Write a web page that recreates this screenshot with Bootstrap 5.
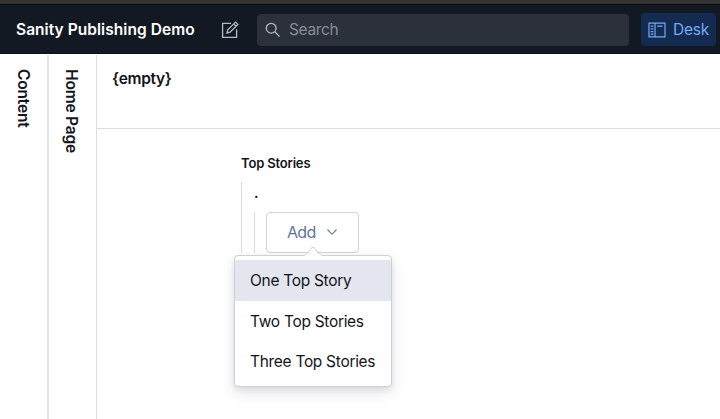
<!DOCTYPE html>
<html lang="en">
<head>
<meta charset="utf-8">
<meta name="viewport" content="width=device-width, initial-scale=1">
<title>Sanity Publishing Demo</title>
<link rel="stylesheet" href="https://cdn.jsdelivr.net/npm/bootstrap@5.3.0/dist/css/bootstrap.min.css">
<style>
body{font-family:Inter,"Liberation Sans",sans-serif;font-size:16px;line-height:20px;color:#13141b;background:#fff;height:100vh;overflow:hidden}
.window-edge{height:5px;background:#373335;border-bottom:1px solid #080a0e}
.studio-bar{height:49px;background:#131923;border-bottom:1px solid #090f19;padding:8px 4px 7px 16px}
.studio-name{width:205px;color:#fff;font-weight:600;font-size:15.5px;letter-spacing:.05px;white-space:nowrap;padding-top:1px}
.compose{width:36px;color:#b4bac5;line-height:0}
.search-box{width:372px;height:32px;background:#2b303a;border-radius:4px;padding-left:8px;color:#878c97;font-size:15.5px;letter-spacing:-.35px}
.search-box svg{color:#b4bac4}
.desk-tab{width:75px;height:33px;margin-left:12px;background:#132b50;color:#79a9f5;border-radius:4px;padding:0 0 0 7px;gap:7px;font-size:15.5px;letter-spacing:-.25px;line-height:20px;border:0}
.desk-tab:hover{background:#132b50;color:#79a9f5}
.side-pane{font-weight:600;font-size:15.5px;letter-spacing:-.18px;writing-mode:vertical-rl;padding-top:14px;line-height:20px}
.pane-content{width:49px;border-right:2px solid #e3e4e8;padding-right:14px;margin-top:1px}
.pane-home{width:48px;border-right:1px solid #dcdde1;padding-right:15px;margin-top:1px}
.doc-head{height:75px;border-bottom:1px solid #dcdde0;padding:15px 15px;font-weight:600;font-size:15.5px;letter-spacing:-.3px}
.doc-body{padding:25px 0 0 144px}
.field-label{font-weight:600;font-size:13px;line-height:18px;letter-spacing:-.17px}
.level-one{border-left:1px solid #d9dbe0;margin-top:10px;padding-left:12px;height:71px}
.item-dot{height:30px;line-height:21px;font-size:14px;font-weight:600}
.level-two{border-left:1px solid #d9dbe0;height:41px;padding-left:11px}
.add-btn{width:93px;height:41px;border:1px solid #cfd2d8;border-radius:4px;color:#62759b;font-size:16px;letter-spacing:-.7px;line-height:20px;padding:0 0 1px 20px;gap:10px}
.story-menu{position:absolute;display:block;left:-32px;top:43px;width:158px;height:132px;min-width:0;padding:4px 0;border:1px solid #ccd0d7;border-radius:4px;box-shadow:0 6px 14px rgba(30,40,60,.13),0 2px 5px rgba(30,40,60,.08);font-size:15.5px;letter-spacing:-.3px;color:#13141b}
.story-menu .dropdown-item{height:40.700px;padding:11px 0 0 15px;line-height:20px;color:#13141b}
.story-menu .dropdown-item.active{background:#e3e6ee;color:#13141b}
.menu-arrow{position:absolute;left:67px;top:-10px}
</style>
<script defer src="https://cdn.jsdelivr.net/npm/bootstrap@5.3.0/dist/js/bootstrap.bundle.min.js"></script>
</head>
<body class="d-flex flex-column">
<div class="window-edge flex-shrink-0"></div>
<header class="studio-bar d-flex align-items-center flex-shrink-0">
  <div class="studio-name">Sanity Publishing Demo</div>
  <div class="compose"><svg width="18" height="18" viewBox="0 0 18 18" fill="none" stroke="currentColor" stroke-width="1.3"><path d="M10 2.3H1.6v14h14V8.2M6 12l.8-3.2 7.8-7.7 2.3 2.3-7.8 7.8zM12.8 2.9l2.3 2.3"/></svg></div>
  <div class="search-box d-flex align-items-center"><svg width="16" height="16" viewBox="0 0 16 16" fill="none" stroke="currentColor" stroke-width="1.3"><circle cx="6.2" cy="6.2" r="4.9"/><path d="m9.8 9.8 4.8 4.8"/></svg><span class="ms-2">Search</span></div>
  <button class="desk-tab btn d-flex align-items-center" type="button"><svg width="18" height="16" viewBox="0 0 18 16" fill="none" stroke="currentColor" stroke-width="1.2"><path d="M1 1.1h16v13.8H1zM7 1v14M2.700 4.200h2.700M2.700 6.900h2.700M2.700 9.600h2.700M2.700 12.200h2.700M9.300 4.200h5.200"/></svg>Desk</button>
</header>
<main class="d-flex flex-grow-1">
  <div class="side-pane pane-content">Content</div>
  <div class="side-pane pane-home">Home Page</div>
  <section class="flex-grow-1">
    <div class="doc-head">{empty}</div>
    <div class="doc-body">
      <div class="field-label">Top Stories</div>
      <div class="level-one">
        <div class="item-dot">.</div>
        <div class="level-two">
          <div class="dropdown position-relative">
            <button class="add-btn btn d-flex align-items-center" type="button">Add<svg width="12" height="8" viewBox="0 0 12 8" fill="none" stroke="currentColor" stroke-width="1.1"><path d="m1.500 1.500 4.500 4.800 4.500-4.800"/></svg></button>
            <div class="story-menu dropdown-menu show">
              <svg class="menu-arrow" width="22" height="12" viewBox="0 0 22 12"><path d="M0 9.500C5 9.500 6.500 6 9 2.500q2-3 4 0C15.500 6 17 9.500 22 9.500V12H0z" fill="#fff"/><path d="M0 9.500C5 9.500 6.500 6 9 2.500q2-3 4 0C15.500 6 17 9.500 22 9.500" fill="none" stroke="#ccd0d7"/></svg>
              <a class="dropdown-item active" href="#">One Top Story</a>
              <a class="dropdown-item" href="#">Two Top Stories</a>
              <a class="dropdown-item" href="#">Three Top Stories</a>
            </div>
          </div>
        </div>
      </div>
    </div>
  </section>
</main>
</body>
</html>
